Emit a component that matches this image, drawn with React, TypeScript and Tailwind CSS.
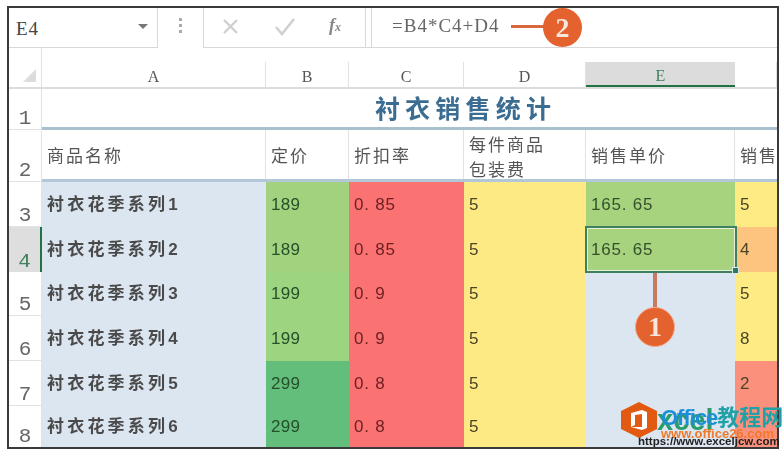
const CJK = "font-['Liberation_Sans','Noto_Sans_CJK_SC',sans-serif]";

const rows = [
  { n: '3', name: '衬衣花季系列1', price: '189', priceBg: 'bg-[#a3d27e]', off: '0. 85', fee: '5', unit: '165. 65', unitBg: 'bg-[#a7d37f]', f: '5', fBg: 'bg-[#ffeb84]', h: 'h-[45px]' },
  { n: '4', name: '衬衣花季系列2', price: '189', priceBg: 'bg-[#a3d27e]', off: '0. 85', fee: '5', unit: '165. 65', unitBg: 'bg-[#a7d37f]', f: '4', fBg: 'bg-[#fcc47e]', h: 'h-[45px]', active: true },
  { n: '5', name: '衬衣花季系列3', price: '199', priceBg: 'bg-[#9dd480]', off: '0. 9', fee: '5', unit: '', unitBg: 'bg-[#dce6f1]', f: '5', fBg: 'bg-[#ffeb84]', h: 'h-[44px]' },
  { n: '6', name: '衬衣花季系列4', price: '199', priceBg: 'bg-[#9dd480]', off: '0. 9', fee: '5', unit: '', unitBg: 'bg-[#dce6f1]', f: '8', fBg: 'bg-[#ffeb84]', h: 'h-[45px]' },
  { n: '7', name: '衬衣花季系列5', price: '299', priceBg: 'bg-[#63be7b]', off: '0. 8', fee: '5', unit: '', unitBg: 'bg-[#dce6f1]', f: '2', fBg: 'bg-[#fb917c]', h: 'h-[45px]' },
  { n: '8', name: '衬衣花季系列6', price: '299', priceBg: 'bg-[#63be7b]', off: '0. 8', fee: '5', unit: '', unitBg: 'bg-[#dce6f1]', f: '', fBg: 'bg-[#fb917c]', h: 'h-[42px]' },
];

const cols = [
  { label: 'A', w: 'w-[224px]' },
  { label: 'B', w: 'w-[83px]' },
  { label: 'C', w: 'w-[115px]' },
  { label: 'D', w: 'w-[122px]' },
  { label: 'E', w: 'w-[149px]', active: true },
  { label: '', w: 'flex-1' },
];

const RowHead = ({ n, h, active }: { n: string; h: string; active?: boolean }) => (
  <div
    className={`${h} w-[33px] shrink-0 flex items-end justify-center font-['Liberation_Mono',monospace] text-[21px] leading-[21px] ${
      active ? 'bg-[#dedede] border-r-2 border-[#217346] text-[#3f7f5c]' : 'border-r border-b border-[#e2e2e2] text-[#666]'
    }`}
  >
    {n}
  </div>
);

export default function App() {
  return (
    <div className={`relative w-[784px] h-[451px] bg-white overflow-hidden ${CJK}`}>
      <div className="absolute left-[7px] top-[6px] w-[772px] h-[443px] border-2 border-[#3a3a3a] overflow-hidden flex flex-col blur-[0.4px]">
        {/* formula bar */}
        <div className="h-[40px] shrink-0 flex bg-white">
          <div className="w-[149px] flex items-center justify-between pl-[7px] pr-[9px] border-r border-b border-[#d8d8d8]">
            <span className="font-['Liberation_Serif',serif] text-[19px] tracking-[1px] text-[#444] pt-[3px]">E4</span>
            <span className="w-0 h-0 border-x-[5px] border-x-transparent border-t-[5px] border-t-[#777] mb-[3px]" />
          </div>
          <div className="w-[45px] flex flex-col items-center justify-center gap-[3px] pb-[6px]">
            <span className="w-[3px] h-[3px] bg-[#aaa]" />
            <span className="w-[3px] h-[3px] bg-[#aaa]" />
            <span className="w-[3px] h-[3px] bg-[#aaa]" />
          </div>
          <div className="w-[163px] flex items-center border-x border-b border-[#d8d8d8] pb-[3px]">
            <svg width="125" height="28" viewBox="0 0 125 28" fill="none" className="shrink-0">
              <path d="M20 8 L33 21 M33 8 L20 21" stroke="#cfcfcf" strokeWidth="2.4" />
              <path d="M72 15 L78 22 L90 7" stroke="#d0d0d0" strokeWidth="2.6" />
            </svg>
            <span className="font-['Liberation_Serif',serif] italic font-bold text-[#888] text-[18px] leading-[20px]">
              f<span className="text-[12px]">x</span>
            </span>
          </div>
          <div className="w-[5px] border-b border-[#d8d8d8]" />
          <div className="flex-1 flex items-center pl-[20px] pb-[3px] border-l border-b border-[#d8d8d8] font-['Liberation_Serif',serif] text-[19px] tracking-[1px] text-[#666]">
            =B4*C4+D4
          </div>
        </div>

        {/* column headers */}
        <div className="h-[41px] shrink-0 flex border-b-2 border-[#dcdcdc] bg-white">
          <div className="w-[33px] shrink-0 flex items-end justify-end pr-[5px] pb-[5px] border-r border-[#e2e2e2]">
            <span className="w-0 h-0 border-l-[13px] border-l-transparent border-b-[13px] border-b-[#dcdcdc]" />
          </div>
          {cols.map((c) => (
            <div key={c.label} className={`${c.w} flex flex-col justify-end`}>
              <div
                className={`h-[25px] pt-[5px] flex items-center justify-center font-['Liberation_Serif',serif] text-[16px] ${
                  c.active ? 'bg-[#dcdcdc] border-b-2 border-[#217346] text-[#3f7f5c]' : 'border-r border-[#e2e2e2] text-[#555]'
                }`}
              >
                {c.label}
              </div>
            </div>
          ))}
        </div>

        {/* title row */}
        <div className="h-[41px] shrink-0 flex">
          <RowHead n="1" h="h-[41px]" />
          <div className="flex-1 flex items-center justify-center pl-[112px] pt-[3px] text-[25px] font-bold tracking-[5.2px] text-[#3b6c91] border-b-[3px] border-[#a9c0cf]">
            衬衣销售统计
          </div>
        </div>

        {/* header row */}
        <div className="h-[52px] shrink-0 flex">
          <RowHead n="2" h="h-[52px]" />
          <div className="flex-1 flex border-b-[3px] border-[#b2c8d9] text-[17px] tracking-[2px] text-[#555] leading-[25px]">
            <div className="w-[224px] flex items-center pl-[5px] pt-[3px] border-r border-[#e2e2e2]">商品名称</div>
            <div className="w-[83px] flex items-center pl-[5px] pt-[3px] border-r border-[#e2e2e2]">定价</div>
            <div className="w-[115px] flex items-center pl-[5px] pt-[3px] border-r border-[#e2e2e2]">折扣率</div>
            <div className="w-[122px] pl-[5px] pt-[3px] border-r border-[#e2e2e2]">
              每件商品
              <br />
              包装费
            </div>
            <div className="w-[149px] flex items-center pl-[5px] pt-[3px] border-r border-[#e2e2e2]">销售单价</div>
            <div className="flex-1 flex items-center pl-[5px] pt-[3px] whitespace-nowrap overflow-hidden">销售</div>
          </div>
        </div>

        {/* data rows */}
        {rows.map((r) => (
          <div key={r.n} className={`${r.h} shrink-0 flex text-[17px]`}>
            <RowHead n={r.n} h={r.h} active={r.active} />
            <div className="w-[224px] flex items-center pl-[5px] bg-[#dce6f1] font-semibold tracking-[3.2px] text-[#4a4a4a]">{r.name}</div>
            <div className={`w-[83px] flex items-center pl-[5px] tracking-[0.3px] text-[#24502a] ${r.priceBg}`}>{r.price}</div>
            <div className="w-[115px] flex items-center pl-[5px] tracking-[0.8px] text-[#6e2022] bg-[#fa7272]">{r.off}</div>
            <div className="w-[122px] flex items-center pl-[5px] text-[#4a4526] bg-[#feea84]">{r.fee}</div>
            <div className={`w-[149px] flex items-center pl-[5px] tracking-[0.8px] text-[#34502a] ${r.unitBg}`}>{r.unit}</div>
            <div className={`flex-1 flex items-center pl-[5px] text-[#4a4526] ${r.fBg}`}>{r.f}</div>
          </div>
        ))}
      </div>

      {/* selected cell */}
      <div className="absolute left-[585px] top-[226px] w-[152px] h-[47px] border-2 border-[#3f8060] outline outline-1 -outline-offset-3 outline-[#e6f0d8] blur-[0.4px]" />
      <div className="absolute left-[732px] top-[267px] w-[7px] h-[7px] bg-[#2f7a58] border border-[#dce6f1]" />

      {/* callouts */}
      <div className="absolute left-[653px] top-[273px] w-[4px] h-[38px] bg-[#c9795f]" />
      <div className="absolute left-[635px] top-[307px] w-[40px] h-[40px] rounded-full bg-[#e4622e] border border-[#f0a78a] flex items-center justify-center font-['Liberation_Serif',serif] font-bold text-[28px] text-[#fbe6dc]">
        1
      </div>
      <div className="absolute left-[511px] top-[25px] w-[36px] h-[3px] bg-[#d9683a]" />
      <div className="absolute left-[543px] top-[8px] w-[39px] h-[39px] rounded-full bg-[#e4622e] flex items-center justify-center font-['Liberation_Serif',serif] font-bold text-[28px] text-[#fbe6dc]">
        2
      </div>

      {/* watermark */}
      <div className="absolute left-[657px] top-[405px] text-[29px] leading-[30px] font-bold text-[#2a9c6e] whitespace-nowrap">xcel</div>
      <div className="absolute left-[661px] top-[405px] text-[22px] leading-[26px] font-bold whitespace-nowrap">
        <span className="text-[#1c8fd8] tracking-[-1px]">Office</span>
        <span className="text-[#22a0a8]">教程网</span>
      </div>
      <div className="absolute left-[661px] top-[426px] text-[13px] leading-[16px] font-bold text-[#ee7a2d] whitespace-nowrap">www.office26.com</div>
      <div className="absolute left-[638px] top-[433px] text-[11.5px] leading-[16px] font-bold text-[#222] whitespace-nowrap">https://www.exceljcw.com</div>
      <svg className="absolute left-[621px] top-[402px]" width="36" height="36" viewBox="0 0 36 36">
        <path d="M18 0 L36 9 L36 27 L18 36 L0 27 L0 9 Z" fill="#e25a12" />
        <path d="M10 11 L21 8 L26 10 L26 26 L21 28 L10 25 L21 25 L21 12 L14 13 L14 23 L10 25 Z" fill="#fff" />
      </svg>
    </div>
  );
}
